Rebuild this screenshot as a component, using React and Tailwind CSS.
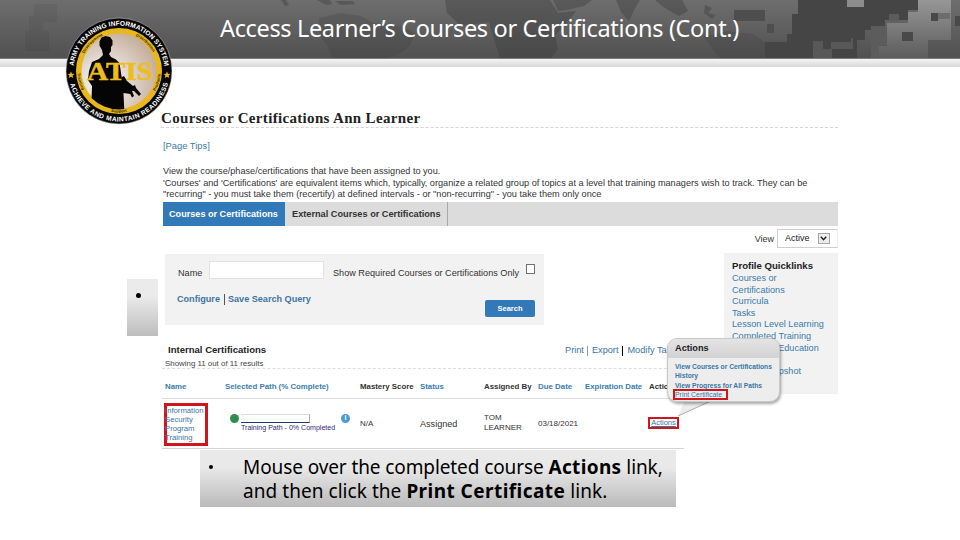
import React from "react";

const quicklinks = [
  "Courses or",
  "Certifications",
  "Curricula",
  "Tasks",
  "Lesson Level Learning",
  "Completed Training",
  "Continuing Education",
  "Records",
  "Career Snapshot",
];

const HeaderArt = () => (
  <svg className="absolute inset-0" width="960" height="67" viewBox="0 0 960 67" shapeRendering="crispEdges">
    <defs>
      <linearGradient id="bar" x1="0" y1="0" x2="0" y2="1">
        <stop offset="0" stopColor="#6e6e6e" />
        <stop offset="1" stopColor="#505050" />
      </linearGradient>
      <linearGradient id="camo" x1="0" y1="0" x2="0" y2="1">
        <stop offset="0" stopColor="#979797" />
        <stop offset="1" stopColor="#5c5c5c" />
      </linearGradient>
      <linearGradient id="strip" x1="0" y1="0" x2="0" y2="1">
        <stop offset="0" stopColor="#f4f4f4" />
        <stop offset="1" stopColor="#d8d8d8" />
      </linearGradient>
    </defs>
    <rect width="960" height="59" fill="url(#bar)" />
    {/* Faded blocks on the left */}
    <g fill="#000" opacity="0.05">
      <path d="M34 4h23v18H34zM25 31h24v20H25zM29 16h14v15H29z" />
    </g>
    {/* Continents */}
    <g fill="#3c3c3c" opacity="0.4" shapeRendering="auto">
      <path d="M281 0l5 0 3 5-4 1zM317 0l13 0 2 4-6 1zM335 1l18 0 2 3-14 1z" />
      <path d="M319 18l22-5 20 3 12 7 30 4 12 6-5 13-12 9-14 4H333l-6-14-8-10z" opacity="0.6" />
      <path d="M445 0h105l8 13 18-2-11 14-10 10 3 14-8 10h-50l-6-20-5-17-28 4-14-13z" />
      <path d="M553 0h39l-8 6-18 4-8 1zM616 0h24l-6 10-5 11-8-9zM655 0h27l6 11-9 5-9-5-8-5zM705 5l7 3-4 5 8 2-4 4-8-6z" />
      <path d="M704 37l22-6 28 3 13 10-3 14h-44l-8-10z" opacity="0.6" />
    </g>
    {/* Digital camouflage on the right */}
    <path fill="#454545" d="M798 0h120v10h-10v10h-23v10h-20v10h-8v18H765V42h22v-8h5V14h6z" />
    <path fill="#4e4e4e" d="M734 10h31v11h-31zM767 24h7v9h-7z" />
    <path fill="#585858" d="M813 41h10v8h8v-7h20v-4h2v11h-21v9h-19z" />
    <path fill="#5c5c5c" d="M889 14h10v7h-10zM871 26h16v19h-8v13h-8z" />
    <path fill="url(#camo)" d="M918 0h33v40h-23v18h-49V46h8V23h21V12h10z" />
    <path fill="#8c8c8c" d="M847 0h17v7h-17z" />
    <path fill="#494949" d="M931 13h7v8h-7zM902 32h11v9h-11zM955 16h5v10h-5z" />
    <path fill="#6d6d6d" d="M938 13h12v6h-12z" />
    <rect y="58" width="960" height="1" fill="#7b7b7b" />
    <rect y="59" width="960" height="8" fill="url(#strip)" />
  </svg>
);

const Logo = () => (
  <svg className="absolute left-[65px] top-[17px] overflow-visible" width="108" height="108" viewBox="-54 -54 108 108">
    <defs>
      <radialGradient id="seal" cx="0.3" cy="0.65" r="0.75">
        <stop offset="0" stopColor="#ffffff" />
        <stop offset="0.55" stopColor="#dcd0c6" />
        <stop offset="1" stopColor="#c4ad98" />
      </radialGradient>
      <clipPath id="sealClip">
        <circle r="38.5" />
      </clipPath>
      <path id="arcTop" d="M-45.500 0A45.500 45.500 0 0 1 45.500 0" />
      <path id="arcBottom" d="M-50.500 0A50.500 50.500 0 0 0 50.500 0" />
      <path id="innerTop" d="M-38.800 0A38.800 38.800 0 0 1 38.800 0" />
      <path id="innerBottom" d="M-41.500 0A41.500 41.500 0 0 0 41.500 0" />
    </defs>
    <circle r="53" fill="#060606" stroke="#ddd" strokeWidth="0.5" />
    <circle r="43" fill="#e8b71e" />
    <circle r="37.5" fill="url(#seal)" />
    {/* Soldier with rifle */}
    <g clipPath="url(#sealClip)" fill="#050505">
      <path d="M-19.500 -25.500l0-4 2-4 4-1.500 4.500 1 2.500 3.500 0 4.500-1.500 2 0 4-2 3 2 3 5 2.500 3.500 3.500 2 13 2 9 4 2 5 3-2 4-7-1 1 22H-25l-.5-11-2-4 .5-14-4-6 1-9 3-9 7-3 4-4-1-5z" />
      <path d="M3 6l2-1 3 5 6 5 2-1 1 3 5 6-2 2-5-5-2 0 2 5-2 1.500-3-6-8-6z" />
    </g>
    <text x="-32" y="9" textLength="66" lengthAdjust="spacingAndGlyphs" fill="#edbd20" stroke="#edbd20" strokeWidth="0.5" className="font-['Liberation_Serif',serif] text-[25px] font-bold">
      ATIS
    </text>
    <g fill="#fff" className="font-['Liberation_Sans',sans-serif] text-[6.600px] font-bold">
      <text>
        <textPath href="#arcTop" startOffset="5" textLength="133">ARMY TRAINING INFORMATION SYSTEM</textPath>
      </text>
      <text>
        <textPath href="#arcBottom" startOffset="13" textLength="133">ACHIEVE AND MAINTAIN READINESS</textPath>
      </text>
    </g>
    <g fill="#2a2000" className="font-['Liberation_Sans',sans-serif] text-[4px] font-bold">
      <text>
        <textPath href="#innerTop" startOffset="18" textLength="26">Development</textPath>
      </text>
      <text>
        <textPath href="#innerTop" startOffset="78" textLength="24">Distribution</textPath>
      </text>
      <text>
        <textPath href="#innerBottom" startOffset="2" textLength="18">Training</textPath>
      </text>
      <text>
        <textPath href="#innerBottom" startOffset="57" textLength="16">Support</textPath>
      </text>
      <text>
        <textPath href="#innerBottom" startOffset="109" textLength="18">Products</textPath>
      </text>
    </g>
    <g fill="#e8b71e">
      <path id="star" d="M-48 .5l1 2.300 2.400.2-1.800 1.600.6 2.400-2.200-1.300-2.200 1.300.6-2.400-1.800-1.600 2.400-.2z" />
      <use href="#star" x="96" />
    </g>
  </svg>
);

const Tabs = () => (
  <div className="ml-px mt-[2px] flex h-6 w-[675px] bg-[#dcdcdc] font-bold leading-6">
    <div className="w-[122px] bg-[#3279b7] pl-[6px] text-[9.120px] text-white">Courses or Certifications</div>
    <div className="w-[163px] border-r border-[#a9a9a9] pl-[7px] text-[9.200px] text-[#333]">
      External Courses or Certifications
    </div>
  </div>
);

const SearchPanel = () => (
  <div className="ml-[3px] mt-7 h-[71px] w-[379px] bg-[#f2f2f2] pl-3 pr-[9px] pt-[7px]">
    <div className="flex h-[18px] items-center text-[9.150px] text-[#333]">
      <span className="mt-[7px] w-8 pl-px">Name</span>
      <div className="h-[18px] w-[115px] border border-[#e2e2e2] bg-white" />
      <span className="ml-[9px] mt-[7px]">Show Required Courses or Certifications Only</span>
      <div className="-mt-[3px] ml-auto h-[10px] w-[9px] border border-[#707070] bg-white" />
    </div>
    <div className="flex justify-between">
      <div className="mt-[14px] flex h-3 items-center text-[9.100px] font-bold text-[#3a76a3]">
        <span className="pt-px">Configure</span>
        <span className="ml-[4px] mr-[3px] h-[11px] w-px bg-[#555]" />
        <span className="pt-px">Save Search Query</span>
      </div>
      <button className="mt-[21px] h-[17px] w-[50px] rounded-[2px] bg-[#3279b7] text-[7.500px] font-bold leading-[16px] text-white">
        Search
      </button>
    </div>
  </div>
);

const cols = "grid grid-cols-[60px_135px_60px_64px_54px_47px_64px_38px] pl-[3px]";

const Results = () => (
  <>
    <div className="mt-[17px] flex h-[14px] items-center pl-[6px]">
      <h2 className="pt-[2px] text-[9.550px] font-bold text-[#222]">Internal Certifications</h2>
      <div className="ml-auto flex w-[119px] items-center whitespace-nowrap pt-[4px] text-[9.200px] text-[#3a76a3]">
        Print
        <span className="mx-[3.500px] h-[10px] w-px bg-[#999]" />
        Export
        <span className="mx-[4px] h-[10px] w-px bg-black" />
        Modify Table
      </div>
    </div>
    <div className="h-[13px] w-[560px] border-b border-dashed border-[#dedede] pl-[3px] pt-[2px] text-[7.900px] leading-[12px] text-[#444]">
      Showing 11 out of 11 results
    </div>
    <div className={`${cols} h-[30px] whitespace-nowrap border-b border-[#dedede] pt-[12px] text-[7.850px] font-bold leading-3 text-[#3a7db0]`}>
      <span>Name</span>
      <span>Selected Path (% Complete)</span>
      <span className="text-[#333]">Mastery Score</span>
      <span>Status</span>
      <span className="text-[#333]">Assigned By</span>
      <span className="text-[7.900px]">Due Date</span>
      <span className="text-[7.800px]">Expiration Date</span>
      <span className="text-[#333]">Actions</span>
    </div>
    <div className={`${cols} h-[50px] border-b border-[#d4d4d4] text-[8px] text-[#333]`}>
      <div className="-ml-px mt-[4px] h-[43px] w-[44px] whitespace-nowrap border-[3px] border-[#d0161b] text-[7.700px] leading-[9px] text-[#3a76a3]">
        <div className="-ml-[2px]">
          Information
          <br />
          Security
          <br />
          Program
          <br />
          Training
        </div>
      </div>
      <div className="flex pl-[5px] pt-[15px]">
        <span className="h-[9px] w-[9px] rounded-full bg-[#2d8f4d]" />
        <div className="ml-[2px] w-[94px]">
          <div className="h-[9px] w-[69px] border-b border-r border-t border-b-[#1b3a6b] border-r-[#aaa] border-t-[#ddd]" />
          <div className="whitespace-nowrap text-[7.050px] leading-[9px] text-[#342c74]">Training Path - 0% Completed</div>
        </div>
        <span className="ml-[6px] flex h-[9px] w-[9px] items-center justify-center rounded-full bg-[#4b9bd4] text-[7px] font-bold text-white">
          i
        </span>
      </div>
      <span className="pt-[19px] leading-3">N/A</span>
      <span className="pt-[19px] text-[9.100px] leading-3">Assigned</span>
      <span className="pt-[14px] leading-[10px]">
        TOM
        <br />
        LEARNER
      </span>
      <span className="whitespace-nowrap pt-[19px] leading-3">03/18/2021</span>
      <span />
      <div className="-ml-px mt-[18px] h-3 w-[31px] border-[2.500px] border-[#d0161b] text-center text-[7.500px] leading-[8px] text-[#3a76a3] underline">
        Actions
      </div>
    </div>
  </>
);

const Sidebar = () => (
  <div className="ml-auto w-[114px] shrink-0 pt-[3px]">
    <div className="flex h-[19px] items-center justify-end text-[9px] text-[#333]">
      <span className="mr-[3px] pt-[2px]">View</span>
      <div className="flex h-[19px] w-[61px] items-center border border-r-[#eee] border-[#cfcfcf] bg-white pl-[7px] text-[#222]">
        Active
        <span className="ml-[8px] flex h-[11px] w-3 items-center justify-center border border-[#a5a5a5] bg-[#ededed]">
          <svg width="7" height="5" viewBox="0 0 7 5">
            <path d="M.8 .8l2.700 2.900L6.200 .8" fill="none" stroke="#222" strokeWidth="1.500" />
          </svg>
        </span>
      </div>
    </div>
    <aside className="mt-[5px] h-[141px] bg-[#f2f2f2] pl-2 pt-[7px] text-[9.150px] leading-[11.600px] text-[#3a7ba8]">
      <h3 className="mb-px text-[9.600px] font-bold leading-[12px] text-[#222]">Profile Quicklinks</h3>
      {quicklinks.map((link) => (
        <div key={link} className="whitespace-nowrap">
          {link}
        </div>
      ))}
    </aside>
  </div>
);

const ActionsMenu = () => (
  <div className="absolute left-[667px] top-[338px] h-[64px] w-[113px] text-[6.700px] font-bold leading-[9px] text-[#3a76a3]">
    <svg className="absolute left-[8px] top-[58px]" width="50" height="24" viewBox="0 0 50 24">
      <path d="M12 0L3 20L38 4" fill="#ededed" />
      <path d="M3 20L38 4" fill="none" stroke="#999" strokeWidth="0.8" />
    </svg>
    <div className="relative h-[64px] overflow-hidden rounded-[10px] border border-[#c9c9c9] bg-[#ededed] shadow-[1px_2px_3px_rgba(0,0,0,0.35)]">
      <div className="h-[19px] bg-linear-to-b from-[#e4e4e4] to-[#d2d2d2] pl-[7px] text-[9.200px] leading-[19px] text-[#222]">Actions</div>
      <div className="whitespace-nowrap pl-[7px] pt-[5px]">
        <div className="leading-[8.500px]">
          View Courses or Certifications
          <br />
          History
        </div>
        <div className="pt-px">View Progress for All Paths</div>
        <div className="-ml-[2px] -mt-px h-[11px] w-[55px] border-2 border-[#d0161b] text-[6.900px] font-normal leading-[7px]">
          Print Certificate
        </div>
      </div>
    </div>
  </div>
);

export default function App() {
  return (
    <div className="relative h-[540px] w-[960px] overflow-hidden bg-white font-['Liberation_Sans',Arial,sans-serif]">
      <header className="relative h-[67px]">
        <HeaderArt />
        <h1 className="relative pl-[220px] pt-[12px] font-['Noto_Sans','DejaVu_Sans',sans-serif] text-[23.500px] leading-8 tracking-[-0.350px] text-white">
          Access Learner’s Courses or Certifications (Cont.)
        </h1>
      </header>
      <Logo />

      <main className="flex h-[382px]">
        <div className="w-[162px] shrink-0 pl-[127px] pt-[212px]">
          <div className="h-[57px] w-[31px] bg-linear-to-b from-[#ebebeb] from-30% to-[#bdbdbd] pl-[9px] pt-[14px]">
            <div className="h-[5px] w-[5px] rounded-full bg-black" />
          </div>
        </div>

        <section className="w-[676px] pt-[42px]">
          <h2 className="h-[19px] border-b border-dashed border-[#d5d5d5] -ml-px font-['Liberation_Serif',serif] text-[15px] font-bold leading-[18px] tracking-[0.330px] text-[#222]">
            Courses or Certifications Ann Learner
          </h2>
          <div className="mt-3 pl-px text-[9.350px] leading-3 text-[#3a7ba8]">[Page Tips]</div>
          <p className="mt-[13px] whitespace-nowrap pl-px text-[9.150px] leading-3 text-[#333]">
            View the course/phase/certifications that have been assigned to you.
          </p>
          <p className="mt-px whitespace-nowrap pl-px text-[9.160px] leading-[11px] text-[#333]">
            'Courses' and 'Certifications' are equivalent items which, typically, organize a related group of topics at a level that training managers wish to track. They can be
            <br />
            "recurring" - you must take them (recertify) at defined intervals - or "non-recurring" - you take them only once
          </p>
          <Tabs />
          <div className="flex">
            <div className="w-[522px]">
              <SearchPanel />
              <Results />
            </div>
            <Sidebar />
          </div>
        </section>
      </main>

      <ActionsMenu />

      <div className="ml-[200px] mt-px flex h-[57px] w-[476px] bg-linear-to-b from-[#e9e9e9] from-30% to-[#bababa] pt-[5px] font-['Noto_Sans','DejaVu_Sans',sans-serif] text-[19px] leading-6 tracking-[-0.100px] text-black">
        <span className="ml-[9px] mt-[10px] h-[4px] w-[4px] rounded-full bg-black" />
        <p className="ml-[30px] whitespace-nowrap">
          Mouse over the completed course <b className="tracking-[0.350px]">Actions</b> link,
          <br />
          <span className="tracking-[0.050px]">
            and then click the <b className="tracking-[0.450px]">Print Certificate</b> link.
          </span>
        </p>
      </div>
    </div>
  );
}
